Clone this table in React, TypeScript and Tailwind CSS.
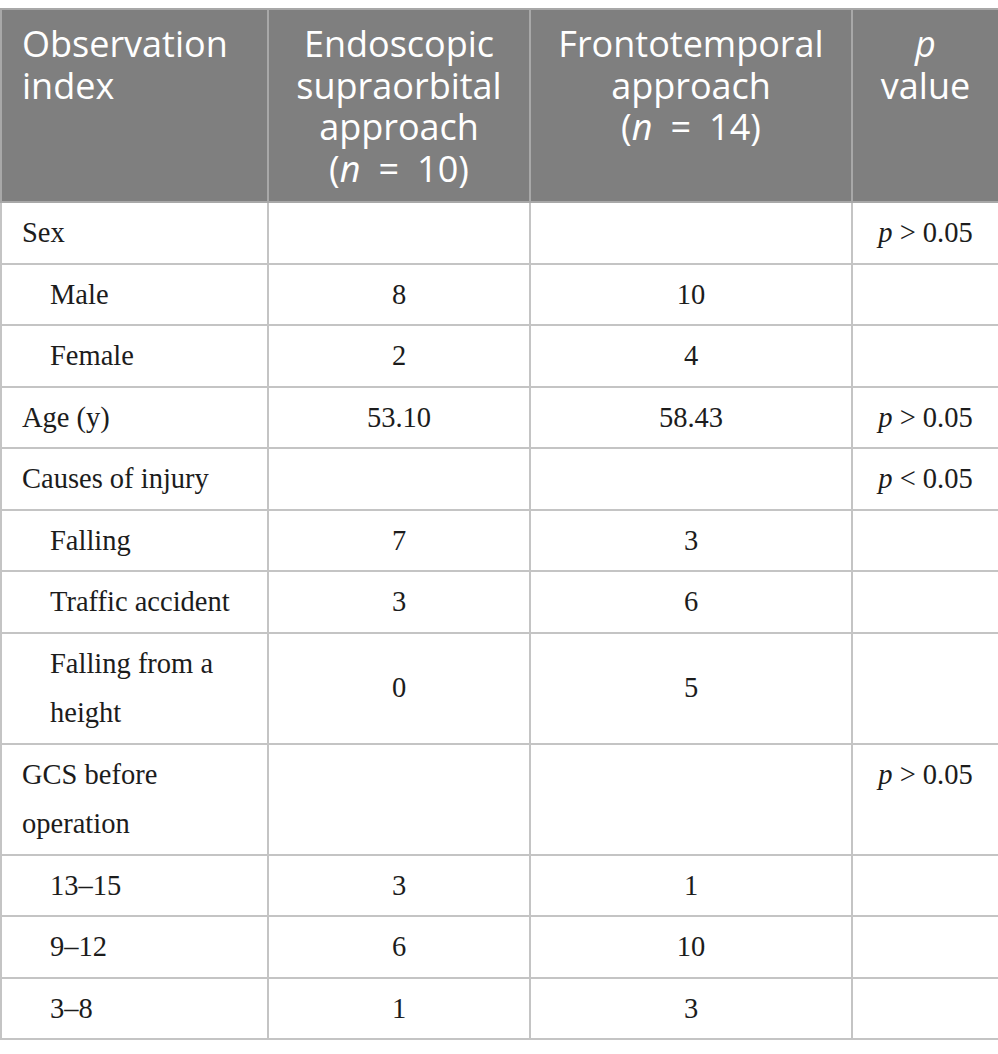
import React from "react";

type Row = {
  label: string[];
  indent?: boolean;
  a?: string;
  b?: string;
  p?: string;
};

const rows: Row[] = [
  { label: ["Sex"], p: "> 0.05" },
  { label: ["Male"], indent: true, a: "8", b: "10" },
  { label: ["Female"], indent: true, a: "2", b: "4" },
  { label: ["Age (y)"], a: "53.10", b: "58.43", p: "> 0.05" },
  { label: ["Causes of injury"], p: "< 0.05" },
  { label: ["Falling"], indent: true, a: "7", b: "3" },
  { label: ["Traffic accident"], indent: true, a: "3", b: "6" },
  { label: ["Falling from a", "height"], indent: true, a: "0", b: "5" },
  { label: ["GCS before", "operation"], p: "> 0.05" },
  { label: ["13–15"], indent: true, a: "3", b: "1" },
  { label: ["9–12"], indent: true, a: "6", b: "10" },
  { label: ["3–8"], indent: true, a: "1", b: "3" },
];

const serif = { fontFamily: '"Liberation Serif", "Times New Roman", serif' };

function Lines({ lines }: { lines: React.ReactNode[] }) {
  return (
    <>
      {lines.map((l, i) => (
        <div key={i} className="whitespace-nowrap">
          {l}
        </div>
      ))}
    </>
  );
}

export default function App() {
  return (
    <div className="w-[998px] bg-white pt-[8px]">
      <table className="w-[998px] table-fixed border-collapse">
        <colgroup>
          <col className="w-[267px]" />
          <col className="w-[262px]" />
          <col className="w-[322px]" />
          <col className="w-[147px]" />
        </colgroup>
        <thead>
          <tr className="bg-[#7f7f7f] text-white font-['Open_Sans',sans-serif] text-[36px] leading-[41.5px]">
            <th className="border-2 border-[#a8a8a8] pl-[20px] pr-[4px] pt-[13px] pb-[12px] text-left align-top font-normal">
              <Lines lines={["Observation", "index"]} />
            </th>
            <th className="border-2 border-[#a8a8a8] px-[4px] pt-[13px] pb-[12px] text-center align-top font-normal">
              <Lines
                lines={[
                  "Endoscopic",
                  "supraorbital",
                  "approach",
                  <>
                    (<i>n</i>
                    {"\u2002"}={"\u2002"}10)
                  </>,
                ]}
              />
            </th>
            <th className="border-2 border-[#a8a8a8] px-[4px] pt-[13px] pb-[12px] text-center align-top font-normal">
              <Lines
                lines={[
                  "Frontotemporal",
                  "approach",
                  <>
                    (<i>n</i>
                    {"\u2002"}={"\u2002"}14)
                  </>,
                ]}
              />
            </th>
            <th className="border-2 border-[#a8a8a8] px-[4px] pt-[13px] pb-[12px] text-center align-top font-normal">
              <Lines lines={[<i key="p">p</i>, "value"]} />
            </th>
          </tr>
        </thead>
        <tbody className="text-[#1c1c1c] text-[28.5px] leading-[49.5px]" style={serif}>
          {rows.map((r, i) => (
            <tr key={i}>
              <td
                className={`border-2 border-[#c4c4c4] py-[5px] pr-[10px] text-left align-middle ${
                  r.indent ? "pl-[48px]" : "pl-[20px]"
                }`}
              >
                <Lines lines={r.label} />
              </td>
              <td className="border-2 border-[#c4c4c4] py-[5px] text-center align-middle">{r.a ?? ""}</td>
              <td className="border-2 border-[#c4c4c4] py-[5px] text-center align-middle">{r.b ?? ""}</td>
              <td className="border-2 border-[#c4c4c4] py-[5px] text-center align-top whitespace-nowrap">
                {r.p ? (
                  <>
                    <i>p</i> {r.p}
                  </>
                ) : (
                  ""
                )}
              </td>
            </tr>
          ))}
        </tbody>
      </table>
    </div>
  );
}
